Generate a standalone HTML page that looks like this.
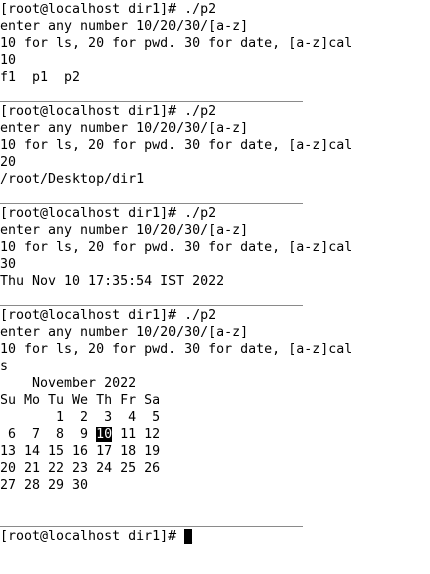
<!DOCTYPE html>
<html><head><meta charset="utf-8"><style>
html,body{margin:0;padding:0;background:#fff;width:430px;height:574px;overflow:hidden}
pre{margin:0;font-family:"DejaVu Sans Mono","Liberation Mono",monospace;font-size:13.3px;line-height:17px;color:#000;position:absolute;left:0;top:1px}
.hl{background:#000;color:#fff}
.cur{background:#000;color:#000}
.sep{position:absolute;left:0;width:303px;height:1px;background:#8a8a8a}
</style></head><body>
<pre>[root@localhost dir1]# ./p2
enter any number 10/20/30/[a-z]
10 for ls, 20 for pwd. 30 for date, [a-z]cal
10
f1  p1  p2

[root@localhost dir1]# ./p2
enter any number 10/20/30/[a-z]
10 for ls, 20 for pwd. 30 for date, [a-z]cal
20
/root/Desktop/dir1

[root@localhost dir1]# ./p2
enter any number 10/20/30/[a-z]
10 for ls, 20 for pwd. 30 for date, [a-z]cal
30
Thu Nov 10 17:35:54 IST 2022

[root@localhost dir1]# ./p2
enter any number 10/20/30/[a-z]
10 for ls, 20 for pwd. 30 for date, [a-z]cal
s
    November 2022
Su Mo Tu We Th Fr Sa
       1  2  3  4  5
 6  7  8  9 <span class="hl">10</span> 11 12
13 14 15 16 17 18 19
20 21 22 23 24 25 26
27 28 29 30


[root@localhost dir1]# <span class="cur">_</span></pre>
<div class="sep" style="top:101px"></div>
<div class="sep" style="top:203px"></div>
<div class="sep" style="top:305px"></div>
<div class="sep" style="top:526px"></div>
</body></html>
